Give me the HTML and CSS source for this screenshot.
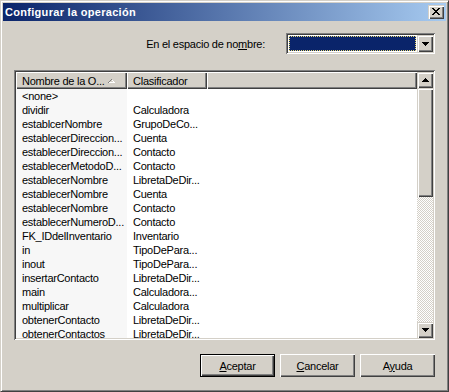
FILE: index.html
```html
<!DOCTYPE html>
<html lang="es">
  <head>
    <meta charset="UTF-8" />
    <title>Configurar la operación</title>
    <link rel="stylesheet" href="styles.css">
  </head>
  <body>
    <div class="window">
      <div class="titlebar">
        <span class="title">Configurar la operación</span>
        <span class="close-btn">
          <svg width="8" height="7" viewBox="0 0 8 7" shape-rendering="crispEdges"><path d="M0 0h2v1H0z M6 0h2v1H6z M1 1h2v1H1z M5 1h2v1H5z M2 2h4v1H2z M3 3h2v1H3z M2 4h4v1H2z M1 5h2v1H1z M5 5h2v1H5z M0 6h2v1H0z M6 6h2v1H6z" fill="#000"/></svg>
        </span>
      </div>
      <div class="content">
        <div class="ns-row">
          <span class="ns-label">En el espacio de no<u>m</u>bre:</span>
          <div class="combo">
            <div class="combo-field"><div class="combo-sel"></div></div>
            <div class="btn3d combo-btn">
              <svg width="7" height="4" viewBox="0 0 7 4" shape-rendering="crispEdges"><path d="M0 0h7v1H0z M1 1h5v1H1z M2 2h3v1H2z M3 3h1v1H3z" fill="#000"/></svg>
            </div>
          </div>
        </div>
        <div class="listview">
          <div class="lv-main">
            <div class="lv-header">
              <div class="hcell c1">Nombre de la O...
                <svg class="sort" width="7" height="4" viewBox="0 0 7 4" shape-rendering="crispEdges"><path d="M3 0h1v1H3z M2 1h1v1H2z M1 2h1v1H1z M0 3h1v1H0z" fill="#808080"/><path d="M4 1h1v1H4z M5 2h1v1H5z M1 3h6v1H1z" fill="#fff"/></svg>
              </div>
              <div class="hcell c2">Clasificador</div>
              <div class="hcell c3"></div>
            </div>
            <div class="lv-rows">
              <div class="row"><span class="c1">&lt;none&gt;</span><span class="c2"></span></div>
              <div class="row"><span class="c1">dividir</span><span class="c2">Calculadora</span></div>
              <div class="row"><span class="c1">establcerNombre</span><span class="c2">GrupoDeCo...</span></div>
              <div class="row"><span class="c1">establecerDireccion...</span><span class="c2">Cuenta</span></div>
              <div class="row"><span class="c1">establecerDireccion...</span><span class="c2">Contacto</span></div>
              <div class="row"><span class="c1">establecerMetodoD...</span><span class="c2">Contacto</span></div>
              <div class="row"><span class="c1">establecerNombre</span><span class="c2">LibretaDeDir...</span></div>
              <div class="row"><span class="c1">establecerNombre</span><span class="c2">Cuenta</span></div>
              <div class="row"><span class="c1">establecerNombre</span><span class="c2">Contacto</span></div>
              <div class="row"><span class="c1">establecerNumeroD...</span><span class="c2">Contacto</span></div>
              <div class="row"><span class="c1">FK_IDdelInventario</span><span class="c2">Inventario</span></div>
              <div class="row"><span class="c1">in</span><span class="c2">TipoDePara...</span></div>
              <div class="row"><span class="c1">inout</span><span class="c2">TipoDePara...</span></div>
              <div class="row"><span class="c1">insertarContacto</span><span class="c2">LibretaDeDir...</span></div>
              <div class="row"><span class="c1">main</span><span class="c2">Calculadora...</span></div>
              <div class="row"><span class="c1">multiplicar</span><span class="c2">Calculadora</span></div>
              <div class="row"><span class="c1">obtenerContacto</span><span class="c2">LibretaDeDir...</span></div>
              <div class="row"><span class="c1">obtenerContactos</span><span class="c2">LibretaDeDir...</span></div>
            </div>
          </div>
          <div class="scrollbar">
            <div class="btn3d sb-btn">
              <svg width="7" height="4" viewBox="0 0 7 4" shape-rendering="crispEdges"><path d="M3 0h1v1H3z M2 1h3v1H2z M1 2h5v1H1z M0 3h7v1H0z" fill="#000"/></svg>
            </div>
            <div class="btn3d sb-thumb"></div>
            <div class="sb-track"></div>
            <div class="btn3d sb-btn">
              <svg width="7" height="4" viewBox="0 0 7 4" shape-rendering="crispEdges"><path d="M0 0h7v1H0z M1 1h5v1H1z M2 2h3v1H2z M3 3h1v1H3z" fill="#000"/></svg>
            </div>
          </div>
        </div>
        <div class="buttons">
          <button class="push default"><span><u>A</u>ceptar</span></button>
          <button class="push"><span><u>C</u>ancelar</span></button>
          <button class="push"><span>A<u>y</u>uda</span></button>
        </div>
      </div>
    </div>
  </body>
</html>
```

FILE: styles.css
```css
body {
  margin: 0;
  font-family: "Liberation Sans", Arial, sans-serif;
  font-size: 11px;
  color: #000;
}
.window {
  width: 449px;
  height: 392px;
  box-sizing: border-box;
  background-color: #d4d0c8;
  border: 1px solid;
  border-color: #d4d0c8 #404040 #404040 #d4d0c8;
  box-shadow: inset 1px 1px #fff, inset -1px -1px #808080;
  padding: 2px;
  display: flex;
  flex-direction: column;
}
.titlebar {
  height: 18px;
  display: flex;
  align-items: center;
  background: linear-gradient(to right, #0a246a, #a6caf0);
}
.title {
  flex: 1;
  padding-left: 2px;
  color: white;
  font-weight: bold;
  letter-spacing: 0.3px;
}
.close-btn {
  width: 16px;
  height: 14px;
  margin-right: 2px;
  box-sizing: border-box;
  background-color: #d4d0c8;
  box-shadow: inset 1px 1px #d4d0c8, inset 2px 2px #fff, inset -1px -1px #404040, inset -2px -2px #808080;
}
.close-btn svg {
  display: block;
  margin: 3px 0 0 4px;
}
.btn3d {
  box-sizing: border-box;
  background-color: #d4d0c8;
  box-shadow: inset 1px 1px #d4d0c8, inset 2px 2px #fff, inset -1px -1px #404040, inset -2px -2px #808080;
}
.content {
  flex: 1;
  padding: 12px 11px 12px 11px;
  display: flex;
  flex-direction: column;
}
.ns-row {
  height: 21px;
  display: flex;
  justify-content: flex-end;
  align-items: center;
  gap: 21px;
}
.ns-label {
  letter-spacing: -0.25px;
}
.combo {
  width: 149px;
  height: 21px;
  box-sizing: border-box;
  padding: 2px;
  display: flex;
  background-color: white;
  box-shadow: inset 1px 1px #808080, inset -1px -1px #fff, inset 2px 2px #404040, inset -2px -2px #d4d0c8;
}
.combo-field {
  flex: 1;
  padding: 1px;
}
.combo-sel {
  height: 100%;
  box-sizing: border-box;
  background-color: #0a246a;
  border: 1px dotted #e8d870;
}
.combo-btn {
  width: 16px;
  height: 17px;
  display: flex;
  justify-content: center;
  align-items: center;
}
.listview {
  margin-top: 16px;
  height: 270px;
  box-sizing: border-box;
  padding: 2px;
  display: flex;
  background-color: white;
  box-shadow: inset 1px 1px #808080, inset -1px -1px #fff, inset 2px 2px #404040, inset -2px -2px #d4d0c8;
}
.lv-main {
  flex: 1;
  overflow: hidden;
  display: flex;
  flex-direction: column;
}
.lv-header {
  height: 17px;
  display: flex;
}
.hcell {
  box-sizing: border-box;
  height: 17px;
  padding-left: 6px;
  display: flex;
  align-items: center;
  background-color: #d4d0c8;
  white-space: nowrap;
  letter-spacing: -0.25px;
  box-shadow: inset 1px 1px #fff, inset -1px -1px #404040, inset -2px -2px #808080;
}
.hcell.c1 {
  width: 111px;
}
.hcell.c2 {
  width: 80px;
}
.hcell.c3 {
  flex: 1;
}
.sort {
  margin-left: auto;
  margin-right: 12px;
}
.lv-rows {
  flex: 1;
  overflow: hidden;
}
.row {
  display: flex;
  height: 14px;
  line-height: 14px;
  white-space: nowrap;
  letter-spacing: -0.25px;
}
.row .c1 {
  width: 111px;
  box-sizing: border-box;
  padding-left: 6px;
  overflow: hidden;
  background-color: #f7f7f7;
}
.row .c2 {
  width: 80px;
  box-sizing: border-box;
  padding-left: 6px;
  overflow: hidden;
}
.scrollbar {
  width: 16px;
  display: flex;
  flex-direction: column;
}
.sb-btn {
  height: 16px;
  display: flex;
  justify-content: center;
  align-items: center;
}
.sb-thumb {
  height: 109px;
}
.sb-track {
  flex: 1;
  background-color: #d4d0c8;
  background-image: conic-gradient(#fff 25%, #d4d0c8 0 50%, #fff 0 75%, #d4d0c8 0);
  background-size: 2px 2px;
}
.buttons {
  margin-top: 14px;
  display: flex;
  justify-content: flex-end;
  gap: 5px;
}
.push {
  width: 75px;
  height: 23px;
  box-sizing: border-box;
  border: none;
  padding: 0;
  font-family: inherit;
  font-size: 11px;
  letter-spacing: -0.25px;
  color: #000;
  background-color: #d4d0c8;
  box-shadow: inset 1px 1px #fff, inset -1px -1px #404040, inset -2px -2px #808080;
}
.push.default {
  border: 1px solid #000;
}
```
